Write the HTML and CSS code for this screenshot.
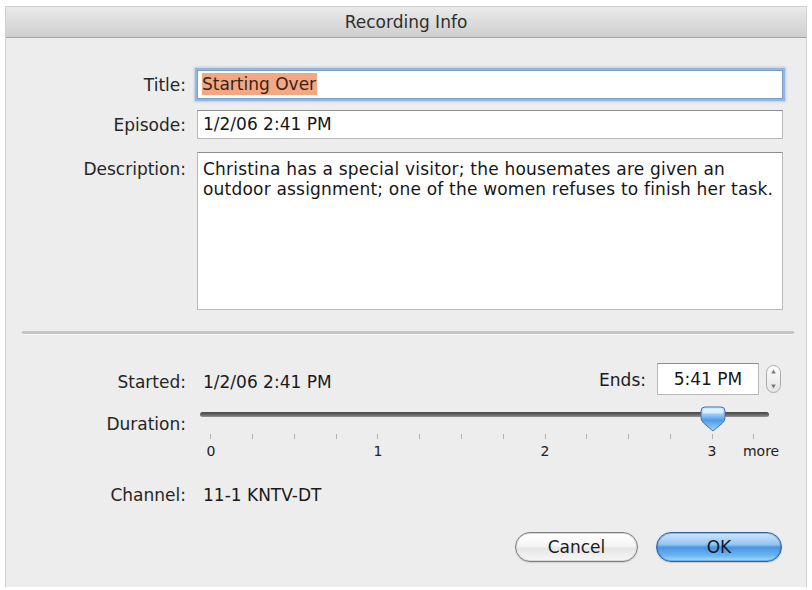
FILE: index.html
```html
<!DOCTYPE html>
<html>
<head>
<meta charset="utf-8">
<title>Recording Info</title>
<link rel="stylesheet" href="styles.css">
</head>
<body>
<div class="window">
  <div class="titlebar">Recording Info</div>

  <div class="form-top">
    <div class="lbl">Title:</div>
    <div class="field focused"><span class="sel">Starting Over</span></div>

    <div class="lbl">Episode:</div>
    <div class="field">1/2/06 2:41 PM</div>

    <div class="lbl lbl-top">Description:</div>
    <div class="field area">Christina has a special visitor; the housemates are given an<br>outdoor assignment; one of the women refuses to finish her task.</div>
  </div>

  <div class="separator"></div>

  <div class="form-bottom">
    <div class="lbl">Started:</div>
    <div class="started-row">
      <span class="value">1/2/06 2:41 PM</span>
      <span class="ends-lbl">Ends:</span>
      <div class="field ends">5:41 PM</div>
      <svg class="stepper" width="15" height="28" viewBox="0 0 15 28">
        <defs>
          <linearGradient id="stg" x1="0" y1="0" x2="0" y2="1">
            <stop offset="0" stop-color="#fdfdfd"/>
            <stop offset="0.5" stop-color="#f1f1f1"/>
            <stop offset="1" stop-color="#e4e4e4"/>
          </linearGradient>
        </defs>
        <rect x="0.5" y="0.5" width="14" height="27" rx="7" fill="url(#stg)" stroke="#ababab"/>
        <path d="M7.5 4.5 L9.8 8.5 H5.2 Z" fill="#7a7a7a"/>
        <path d="M7.5 23.5 L9.8 19.5 H5.2 Z" fill="#7a7a7a"/>
      </svg>
    </div>

    <div class="lbl lbl-duration">Duration:</div>
    <div class="slider">
      <div class="track-wrap">
        <div class="track"></div>
        <svg class="thumb" width="26" height="26" viewBox="0 0 26 26">
          <defs>
            <linearGradient id="thg" x1="0" y1="0" x2="0" y2="1">
              <stop offset="0" stop-color="#dcefff"/>
              <stop offset="0.35" stop-color="#8ec4f5"/>
              <stop offset="0.55" stop-color="#4f9be6"/>
              <stop offset="1" stop-color="#9fd6ff"/>
            </linearGradient>
          </defs>
          <path d="M5 1 H21 Q25 1 25 5 V11.5 Q25 14.5 22.5 17 L13 25 L3.5 17 Q1 14.5 1 11.5 V5 Q1 1 5 1 Z" fill="url(#thg)" stroke="#3d6fae" stroke-width="1"/>
          <path d="M5.5 3 H20.5 Q23 3 23 5.5 V7.5 H3 V5.5 Q3 3 5.5 3 Z" fill="#ffffff" opacity="0.55"/>
        </svg>
      </div>
      <div class="scale">
        <div class="mark"><i class="tick"></i><span class="num">0</span></div>
        <div class="mark"><i class="tick"></i><span class="num"></span></div>
        <div class="mark"><i class="tick"></i><span class="num"></span></div>
        <div class="mark"><i class="tick"></i><span class="num"></span></div>
        <div class="mark"><i class="tick"></i><span class="num">1</span></div>
        <div class="mark"><i class="tick"></i><span class="num"></span></div>
        <div class="mark"><i class="tick"></i><span class="num"></span></div>
        <div class="mark"><i class="tick"></i><span class="num"></span></div>
        <div class="mark"><i class="tick"></i><span class="num">2</span></div>
        <div class="mark"><i class="tick"></i><span class="num"></span></div>
        <div class="mark"><i class="tick"></i><span class="num"></span></div>
        <div class="mark"><i class="tick"></i><span class="num"></span></div>
        <div class="mark"><i class="tick"></i><span class="num">3</span></div>
        <div class="mark"><i class="tick"></i><span class="num more">more</span></div>
      </div>
    </div>

    <div class="lbl channel">Channel:</div>
    <div class="value channel">11-1 KNTV-DT</div>
  </div>

  <div class="buttons">
    <button class="btn cancel">Cancel</button>
    <button class="btn ok">OK</button>
  </div>
</div>
</body>
</html>
```

FILE: styles.css
```css
body {
  margin: 0;
  background: #ffffff;
  font-family: "DejaVu Sans", "Liberation Sans", sans-serif;
  font-size: 17px;
  color: #1a1a1a;
}

.window {
  margin: 7px 0 0 6px;
  width: 800px;
  height: 580px;
  background: #ededed;
  box-shadow: 0 0 0 1px #cfcfcf;
  display: flex;
  flex-direction: column;
}

.titlebar {
  height: 30px;
  line-height: 30px;
  text-align: center;
  color: #2e2e2e;
  background: linear-gradient(#ebebeb, #d9d9d9 60%, #cfcfcf);
  border-bottom: 1px solid #a5a5a5;
}

.form-top {
  display: grid;
  grid-template-columns: 180px 1fr;
  column-gap: 11px;
  row-gap: 11px;
  align-items: center;
  padding: 32px 23px 0 0;
}

.lbl {
  text-align: right;
  line-height: 20px;
  color: #262626;
  white-space: nowrap;
}

.lbl-top {
  align-self: start;
  margin-top: 9px;
}

.field {
  box-sizing: border-box;
  height: 29px;
  background: #ffffff;
  border: 1px solid #b9b9b9;
  border-top-color: #8e8e8e;
  padding: 0 5px;
  line-height: 27px;
  white-space: nowrap;
  color: #161616;
}

.focused {
  border-color: #7d9dc6;
  box-shadow: 0 0 0 2px #94b6e0, 0 0 2px 3px rgba(130, 165, 215, 0.45);
}

.sel {
  display: inline-block;
  line-height: 22px;
  padding: 0 1px 0 0;
  margin-left: -1px;
  background: #f3a884;
  color: #3a2418;
}

.area {
  align-self: start;
  margin-top: 2px;
  height: 158px;
  padding: 6px 5px;
  line-height: 20px;
  letter-spacing: 0.2px;
  white-space: nowrap;
}

.separator {
  margin: 21px 12px 0 16px;
  border-top: 3px solid #c6c6c6;
  border-bottom: 1px solid #f8f8f8;
}

.form-bottom {
  display: grid;
  grid-template-columns: 180px 1fr;
  column-gap: 11px;
  row-gap: 8px;
  padding: 28px 25px 0 0;
}

.form-bottom > .lbl:first-child {
  align-self: center;
  margin-top: 6px;
}

.started-row {
  display: flex;
  align-items: center;
  height: 32px;
}

.value {
  padding-left: 6px;
  line-height: 20px;
  white-space: nowrap;
}

.started-row .value {
  margin-top: 6px;
}

.ends-lbl {
  margin-left: auto;
  margin-right: 11px;
  margin-top: 2px;
}

.ends {
  width: 102px;
  height: 32px;
  line-height: 30px;
  text-align: center;
}

.stepper {
  margin-left: 7px;
  display: block;
}

.lbl-duration {
  align-self: start;
  margin-top: 11px;
}

.slider {
  position: relative;
}

.track-wrap {
  position: relative;
  box-sizing: border-box;
  height: 24px;
  padding-top: 9px;
}

.track {
  margin-left: 3px;
  width: 569px;
  height: 5px;
  border-radius: 3px;
  background: linear-gradient(#474747, #6a6a6a 60%, #989898);
}

.thumb {
  position: absolute;
  left: 503px;
  top: 3px;
}

.scale {
  display: grid;
  grid-template-columns: repeat(14, 41.77px);
  margin-left: -7px;
  margin-top: 6px;
}

.mark {
  display: flex;
  flex-direction: column;
  align-items: center;
}

.tick {
  display: block;
  width: 1px;
  height: 5px;
  margin-top: 1px;
  background: #b3b3b3;
}

.num {
  height: 16px;
  margin-top: 4px;
  font-size: 14px;
  line-height: 16px;
  color: #222222;
}

.num.more {
  align-self: flex-start;
  margin-left: 10px;
  white-space: nowrap;
}

.channel {
  margin-top: 18px;
}

.buttons {
  display: flex;
  justify-content: flex-end;
  gap: 18px;
  margin-top: 27px;
  padding-right: 24px;
}

.btn {
  box-sizing: border-box;
  height: 30px;
  border-radius: 15px;
  font: inherit;
  color: #1a1a1a;
  padding: 0;
}

.cancel {
  width: 123px;
  border: 1px solid #7e7e7e;
  background: linear-gradient(#ffffff, #f6f6f6 45%, #e6e6e6 55%, #f7f7f7);
  box-shadow: inset 0 0 0 1px #d9d9d9, 0 1px 1px rgba(0, 0, 0, 0.12);
}

.ok {
  width: 126px;
  border: 1px solid #2f62a3;
  background: linear-gradient(#cfe6fc, #95c7f3 40%, #4a94e3 52%, #6bb5f2 80%, #a6dcff);
  box-shadow: inset 0 0 0 1px rgba(40, 90, 160, 0.35), 0 1px 1px rgba(0, 0, 0, 0.15);
  color: #0f1a28;
}
```
